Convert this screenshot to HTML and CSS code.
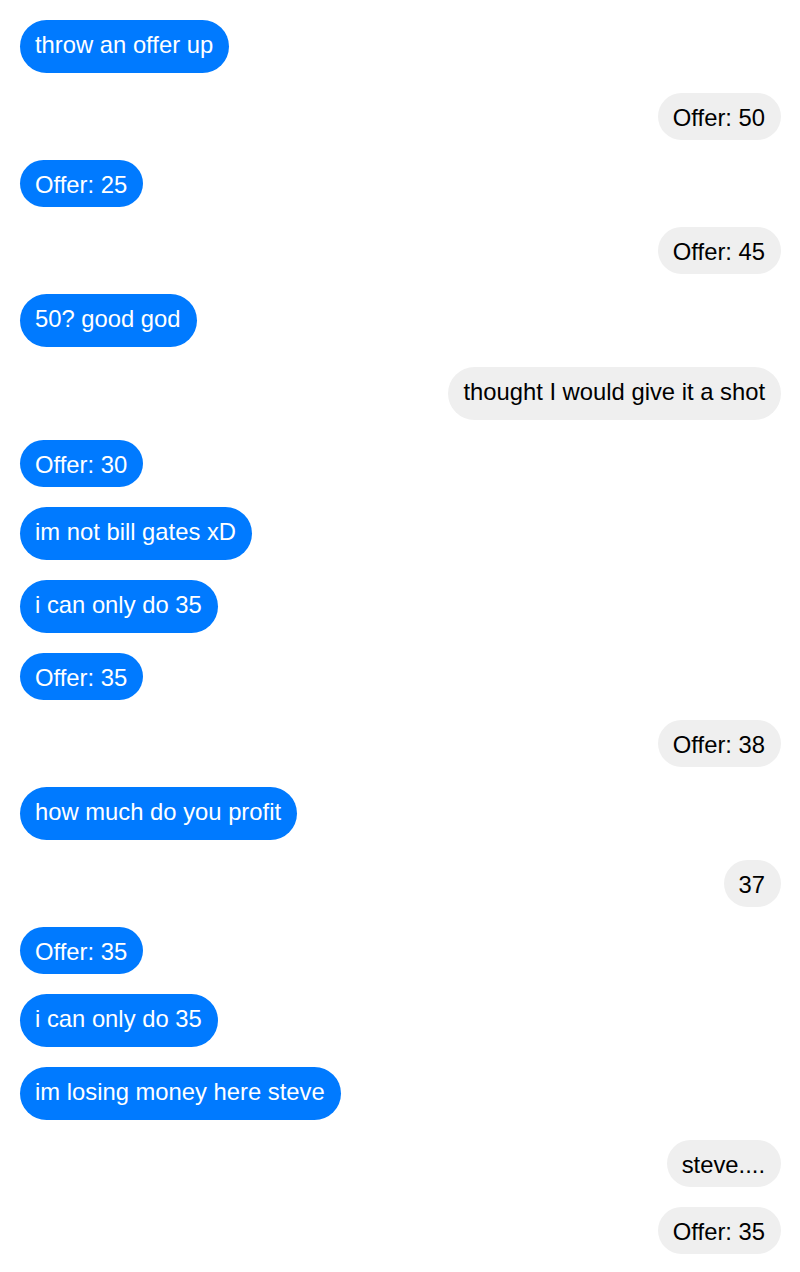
FILE: index.html
```html
<!DOCTYPE html>
<html>
<head>
<meta charset="utf-8">
<link rel="stylesheet" href="styles.css">
</head>
<body>
<div class="chat">
  <div class="msg them desc">throw an offer up</div>
  <div class="msg me">Offer: 50</div>
  <div class="msg them">Offer: 25</div>
  <div class="msg me">Offer: 45</div>
  <div class="msg them desc">50? good god</div>
  <div class="msg me desc">thought I would give it a shot</div>
  <div class="msg them">Offer: 30</div>
  <div class="msg them desc">im not bill gates xD</div>
  <div class="msg them desc">i can only do 35</div>
  <div class="msg them">Offer: 35</div>
  <div class="msg me">Offer: 38</div>
  <div class="msg them desc">how much do you profit</div>
  <div class="msg me">37</div>
  <div class="msg them">Offer: 35</div>
  <div class="msg them desc">i can only do 35</div>
  <div class="msg them desc">im losing money here steve</div>
  <div class="msg me">steve....</div>
  <div class="msg me">Offer: 35</div>
</div>
</body>
</html>
```

FILE: styles.css
```css
html, body {
  margin: 0;
  padding: 0;
  background: #ffffff;
}
body {
  font-family: "Liberation Sans", Arial, sans-serif;
}
.chat {
  display: flex;
  flex-direction: column;
  gap: 20px;
  padding: 20px 19px 20px 20px;
}
.msg {
  font-size: 23.8px;
  line-height: 28px;
  padding: 11px 16px 8px 15px;
  border-radius: 27px;
  white-space: nowrap;
}
.msg.desc {
  padding-bottom: 14px;
}
.them {
  align-self: flex-start;
  background: #007aff;
  color: #ffffff;
}
.me {
  align-self: flex-end;
  background: #efefef;
  color: #000000;
}
```
